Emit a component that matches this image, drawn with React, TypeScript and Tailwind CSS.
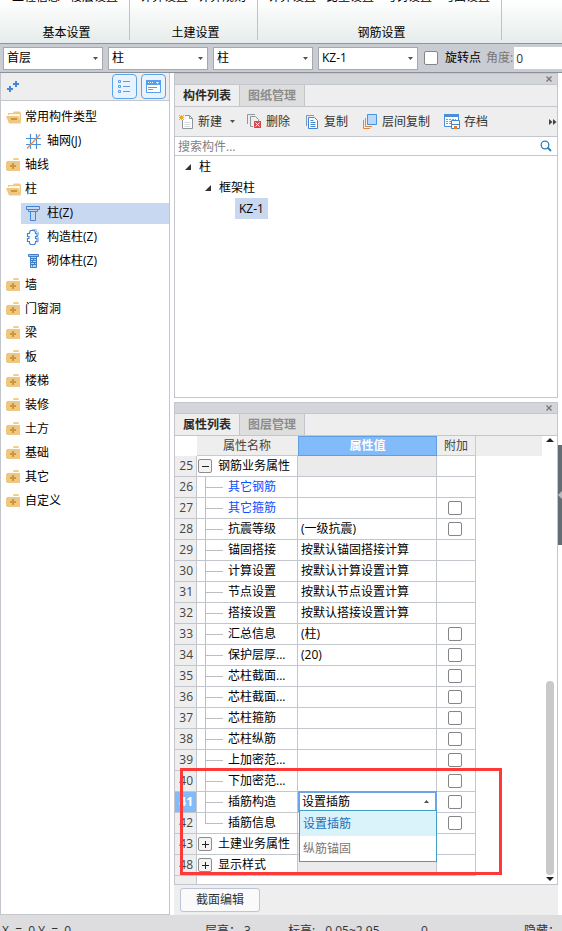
import { useState, type ReactNode } from "react";

const ribbonGroups = [
  { title: "基本设置", width: "w-[130px]", pad: "pl-3", items: ["工程信息", "楼层设置"] },
  { title: "土建设置", width: "w-[128px]", pad: "pl-2.5", items: ["计算设置", "计算规则"] },
  { title: "钢筋设置", width: "w-[244px]", pad: "pl-2.5", items: ["计算设置", "比重设置", "弯钩设置", "弯曲设置"] },
];

type IconName = "grid" | "column" | "structural" | "masonry";
type TreeRow = { label: string; kind: "open" | "closed" | "leaf"; icon?: IconName; selected?: boolean };

const treeRows: TreeRow[] = [
  { label: "常用构件类型", kind: "open" },
  { label: "轴网(J)", kind: "leaf", icon: "grid" },
  { label: "轴线", kind: "closed" },
  { label: "柱", kind: "open" },
  { label: "柱(Z)", kind: "leaf", icon: "column", selected: true },
  { label: "构造柱(Z)", kind: "leaf", icon: "structural" },
  { label: "砌体柱(Z)", kind: "leaf", icon: "masonry" },
  { label: "墙", kind: "closed" },
  { label: "门窗洞", kind: "closed" },
  { label: "梁", kind: "closed" },
  { label: "板", kind: "closed" },
  { label: "楼梯", kind: "closed" },
  { label: "装修", kind: "closed" },
  { label: "土方", kind: "closed" },
  { label: "基础", kind: "closed" },
  { label: "其它", kind: "closed" },
  { label: "自定义", kind: "closed" },
];

type Prop = {
  no: number;
  name: string;
  value?: string;
  check?: boolean;
  link?: boolean;
  group?: "plus" | "minus";
  editing?: boolean;
  last?: boolean;
};

const props: Prop[] = [
  { no: 25, name: "钢筋业务属性", group: "minus" },
  { no: 26, name: "其它钢筋", link: true },
  { no: 27, name: "其它箍筋", link: true, check: true },
  { no: 28, name: "抗震等级", value: "(一级抗震)", check: true },
  { no: 29, name: "锚固搭接", value: "按默认锚固搭接计算" },
  { no: 30, name: "计算设置", value: "按默认计算设置计算" },
  { no: 31, name: "节点设置", value: "按默认节点设置计算" },
  { no: 32, name: "搭接设置", value: "按默认搭接设置计算" },
  { no: 33, name: "汇总信息", value: "(柱)", check: true },
  { no: 34, name: "保护层厚...", value: "(20)", check: true },
  { no: 35, name: "芯柱截面...", check: true },
  { no: 36, name: "芯柱截面...", check: true },
  { no: 37, name: "芯柱箍筋", check: true },
  { no: 38, name: "芯柱纵筋", check: true },
  { no: 39, name: "上加密范...", check: true },
  { no: 40, name: "下加密范...", check: true },
  { no: 41, name: "插筋构造", editing: true, check: true },
  { no: 42, name: "插筋信息", check: true, last: true },
  { no: 43, name: "土建业务属性", group: "plus" },
  { no: 48, name: "显示样式", group: "plus" },
];

function FolderClosed() {
  return (
    <svg width="15" height="14" viewBox="0 0 15 14" aria-hidden="true">
      <path d="M7 2V1l1-1h4l1 1v1z" fill="#f3cd8d" />
      <path d="M1 3h13v10H1z" fill="#efc781" />
      <path d="M0 4h14v8H0z" fill="#efc781" />
      <path d="M6 5h2v2h2v2H8v2H6V9H4V7h2z" fill="#c9983f" />
    </svg>
  );
}

function FolderOpen() {
  return (
    <svg width="16" height="13" viewBox="0 0 16 13" aria-hidden="true">
      <path d="M2 4V2h5l1-1.500h5.500L15 2v9h-1.500V4z" fill="#f0c885" />
      <path d="M3 3h11v1H3z" fill="#fff3da" />
      <path d="M0 5h12.500l2.500 7.500H3z" fill="#efc781" />
      <path d="M5 7h6v2H5z" fill="#c9983f" />
    </svg>
  );
}

function LeafIcon({ name }: { name: IconName }) {
  if (name === "grid")
    return (
      <svg width="15" height="15" viewBox="0 0 15 15" fill="none" aria-hidden="true">
        <path d="M4.500 0v15M10.500 0v15M0 4.500h15M0 10.500h15" stroke="#4a8fdc" strokeWidth="1.200" />
        <path d="M1 14.500L14 .5" stroke="#ec8a4c" strokeWidth="1.300" />
      </svg>
    );
  if (name === "column")
    return (
      <svg width="15" height="15" viewBox="0 0 15 15" fill="none" stroke="#3f86d6" aria-hidden="true">
        <path d="M.5 .5h13v3H.5zM2.500 3.500v2h9v-2M4.500 5.500v9h5v-9" />
      </svg>
    );
  if (name === "structural")
    return (
      <svg width="15" height="16" viewBox="0 0 15 16" fill="none" aria-hidden="true">
        <path d="M6.500 2V.5h4V3h2v3.500h-1v2h1V13h-2" stroke="#9cc6f0" />
        <path d="M4.500 1.500h4l1 2v1h1.500v3H9.500v2H11v3H9.500v1.500l-1 1.500h-4l-1-1.500v-1.500H1.500v-3H3v-2H1.500v-3h2v-1z" stroke="#3f86d6" strokeWidth="1.200" fill="#fff" />
      </svg>
    );
  return (
    <svg width="13" height="14" viewBox="0 0 13 14" fill="none" stroke="#3f7fc8" aria-hidden="true">
      <path d="M1.500 .5h10v2h-10z" fill="#9fc6f2" />
      <path d="M3.500 2.500h6v11h-6z" fill="#b5d3f5" />
      <path d="M3.500 4.500h6M3.500 6.500h6M3.500 8.500h6M3.500 10.500h6M6.500 4.500v2M5.500 6.500v2M7.500 8.500v2M5.500 10.500v2" />
    </svg>
  );
}

function Caret({ up = false }: { up?: boolean }) {
  return (
    <svg width="5" height="3" viewBox="0 0 5 3" className="shrink-0" aria-hidden="true">
      <path d={up ? "M0 3L2.500 0 5 3z" : "M0 0h5L2.500 3z"} fill="#505050" />
    </svg>
  );
}

function Combo({ label, value }: { label: string; value: string }) {
  return (
    <div className="relative w-[100px] shrink-0">
      <select
        aria-label={label}
        className="block h-[23px] w-full appearance-none border border-[#a5a8ad] bg-white pl-[3px] text-black outline-none"
      >
        <option>{value}</option>
      </select>
      <span className="pointer-events-none absolute right-[5px] top-2.5">
        <Caret />
      </span>
    </div>
  );
}

function PanelHeader({ tabs }: { tabs: [string, string] }) {
  return (
    <>
      <div className="flex h-3 items-center justify-end border-y border-[#c3c6cc] bg-[#d3d5db] pr-[5px]">
        <button aria-label="关闭">
          <svg width="6" height="6" viewBox="0 0 6 6" className="block" aria-hidden="true">
            <path d="M.5 .5l5 5M5.500 .5l-5 5" stroke="#777" strokeWidth="1.400" />
          </svg>
        </button>
      </div>
      <div role="tablist" className="flex h-[22px] border-b border-[#c3c6cc] bg-[#eee] font-bold">
        <button role="tab" aria-selected="true" className="w-[65px] border-r border-[#c3c6cc] text-[#2b2b2b]">
          {tabs[0]}
        </button>
        <button role="tab" aria-selected="false" className="w-[65px] border-r border-[#c3c6cc] bg-[#dedede] text-[#8c8c8c]">
          {tabs[1]}
        </button>
      </div>
    </>
  );
}

function ToolButton({ icon, children }: { icon: ReactNode; children: ReactNode }) {
  return (
    <button className="flex shrink-0 items-center gap-1 whitespace-nowrap text-[#333]">
      <span className="flex w-4 justify-center">{icon}</span>
      {children}
    </button>
  );
}

const boxClass = "block size-3.5 appearance-none rounded-[2px] border border-[#858585] bg-white checked:bg-[#82bbfa]";

function NameCell({ row }: { row: Prop }) {
  if (row.group)
    return (
      <div className="flex h-5 items-center gap-1.5 pl-px">
        <button
          aria-label={row.group === "minus" ? "折叠" : "展开"}
          className="flex size-3.5 items-center justify-center rounded-[2px] border border-[#8c8c8c] bg-[#f4f4f4]"
        >
          <svg width="8" height="8" viewBox="0 0 8 8" stroke="#222" aria-hidden="true">
            <path d={row.group === "minus" ? "M1 4.500h7" : "M1 4.500h7M4.500 1v7"} />
          </svg>
        </button>
        {row.name}
      </div>
    );
  return (
    <div className="flex h-5 items-center pl-2">
      <span className={`flex w-[18px] flex-col self-stretch ${row.last ? "" : "border-l border-[#bbbdc1]"}`}>
        <span className={`h-[11px] border-b border-[#bbbdc1] ${row.last ? "border-l" : ""}`} />
      </span>
      <span className={`ml-[5px] ${row.link ? "text-[#0a50ff]" : ""}`}>{row.name}</span>
    </div>
  );
}

function EditingCell() {
  const options = ["设置插筋", "纵筋锚固"];
  const [value, setValue] = useState(options[0]);
  return (
    <div className="relative -mr-px -mt-px">
      <button
        aria-haspopup="listbox"
        aria-expanded="true"
        aria-label="插筋构造"
        className="flex h-[21px] w-full items-center justify-between border-2 border-[#6aa5e8] bg-white pl-0.5 pr-[6px]"
      >
        {value}
        <Caret up />
      </button>
      <ul role="listbox" className="absolute left-px right-0 top-[19px] z-10 border border-[#3ea2c8] bg-white">
        {options.map((o) => (
          <li
            key={o}
            role="option"
            aria-selected={o === value}
            onClick={() => setValue(o)}
            className={`h-[25px] pl-[3px] leading-[25px] ${o === value ? "bg-[#daf2fa] text-[#1b6fb5]" : "text-[#777]"}`}
          >
            {o}
          </li>
        ))}
      </ul>
    </div>
  );
}

function PropertyTable() {
  return (
    <table className="w-[301px] table-fixed border-separate border-spacing-0 text-left text-black">
      <colgroup>
        <col className="w-[22px]" />
        <col className="w-[101px]" />
        <col className="w-[139px]" />
        <col className="w-[39px]" />
      </colgroup>
      <thead>
        <tr className="h-5 text-[#444]">
          <th className="bg-white p-0" aria-label="序号" />
          <th className="border-b border-[#c9cbcf] bg-[#eee] p-0 pr-px text-center font-normal">属性名称</th>
          <th className="border border-[#5f9fe0] bg-[#82bbfa] p-0 text-center text-white">属性值</th>
          <th className="border-b border-r border-[#c9cbcf] bg-[#eee] p-0 text-center font-normal">附加</th>
        </tr>
      </thead>
      <tbody>
        {props.map((row) => (
          <tr key={row.no} className="h-[21px]">
            <td
              className={`border-b border-r border-[#c3c6cc] p-0 pr-[3px] text-right ${
                row.editing ? "bg-[#82bbfa] font-bold text-white" : "bg-[#eee] text-[#444]"
              }`}
            >
              {row.no}
            </td>
            <td className="whitespace-nowrap border-b border-r border-[#c3c6cc] p-0">
              <NameCell row={row} />
            </td>
            <td className={`whitespace-nowrap border-b border-r border-[#c3c6cc] p-0 ${row.group ? "bg-[#ebebeb]" : ""}`}>
              {row.editing ? <EditingCell /> : <div className="pl-[3px]">{row.value}</div>}
            </td>
            <td className="border-b border-r border-[#c3c6cc] p-0">
              {row.check && (
                <div className="flex pl-[11px]">
                  <input type="checkbox" aria-label={`附加 ${row.name}`} className={boxClass} />
                </div>
              )}
            </td>
          </tr>
        ))}
      </tbody>
    </table>
  );
}

export default function App() {
  return (
    <div className="flex h-screen flex-col overflow-hidden bg-white font-['Open_Sans','Noto_Sans_CJK_SC',sans-serif] text-[12px] leading-4 text-black">
      <header className="flex h-11 shrink-0 overflow-hidden border-b border-[#8b9698] bg-linear-to-b from-white to-[#e6eceb]">
        {ribbonGroups.map((g) => (
          <section key={g.title} className={`flex h-10 shrink-0 flex-col justify-between border-r border-[#bfc3c5] ${g.width}`}>
            <div className={`flex h-[5px] items-end gap-2.5 whitespace-nowrap ${g.pad}`}>
              {g.items.map((item, i) => (
                <button key={i}>{item}</button>
              ))}
            </div>
            <h2 className="h-[15px] pl-1 text-center">{g.title}</h2>
          </section>
        ))}
      </header>

      <div className="flex h-[29px] shrink-0 items-center gap-[5px] border-b border-[#8c9198] bg-[#c9ccd2] pl-[3px]">
        <Combo label="楼层" value="首层" />
        <Combo label="构件大类" value="柱" />
        <Combo label="构件类型" value="柱" />
        <Combo label="构件" value="KZ-1" />
        <label className="ml-px flex shrink-0 items-center gap-[7px]">
          <input type="checkbox" className={boxClass} />
          旋转点
        </label>
        <label className="flex min-w-0 flex-1 items-center gap-px whitespace-nowrap text-[#777]">
          角度:
          <input defaultValue="0" className="h-[22px] min-w-0 flex-1 bg-white pl-0.5 text-[#333] outline-none" />
        </label>
      </div>

      <main className="flex min-h-0 flex-1">
        <nav className="mr-1 flex w-[170px] shrink-0 flex-col border-x border-b border-[#c3c6cc]">
          <div className="flex h-7 shrink-0 items-start gap-1 border-b border-[#c3c6cc] bg-[#eee] pl-1.5 pr-[3px] pt-px">
            <button aria-label="添加" className="mr-auto mt-[7px]">
              <svg width="12" height="11" viewBox="0 0 12 11" className="block" aria-hidden="true">
                <path d="M2 5h2v2h2v2H4v2H2V9H0V7h2zM8 0h2v2h2v2h-2v2H8V4H6V2h2z" fill="#4387d6" />
              </svg>
            </button>
            <button aria-label="列表视图" className="flex size-[25px] items-center justify-center rounded border border-[#5aa2ec] bg-[#e9f3fd]">
              <svg width="13" height="13" viewBox="0 0 13 13" fill="none" stroke="#559fec" aria-hidden="true">
                <path d="M.5 .5h2v2h-2zM.5 5.500h2v2h-2zM.5 10.500h2v2h-2zM5 1.500h7M5 6.500h7M5 11.500h7" />
              </svg>
            </button>
            <button aria-label="面板视图" className="flex size-[25px] items-center justify-center rounded border border-[#5aa2ec] bg-[#e9f3fd]">
              <svg width="15" height="13" viewBox="0 0 15 13" fill="none" aria-hidden="true">
                <path d="M.5 .5h14v12H.5z" fill="#fff" stroke="#559fec" />
                <path d="M0 0h15v5H0z" fill="#559fec" />
                <path d="M2 2h1v1H2zM4 2h1v1H4zM6 2h1v1H6zM10 2h3l-1.500 2z" fill="#fff" />
                <path d="M2 7.500h9M2 9.500h5" stroke="#559fec" />
              </svg>
            </button>
          </div>
          <ul className="pt-1">
            {treeRows.map((r) => (
              <li key={r.label} className="flex h-6 items-center">
                {r.kind === "leaf" ? (
                  <button className={`ml-5 flex h-[21px] flex-1 items-center gap-1.5 pl-1 ${r.selected ? "bg-[#c8d8f0]" : ""}`}>
                    <span className="flex w-4 justify-center">{r.icon && <LeafIcon name={r.icon} />}</span>
                    {r.label}
                  </button>
                ) : (
                  <button className="flex items-center gap-[3px] pl-1">
                    <span className="flex w-[17px] justify-center">{r.kind === "open" ? <FolderOpen /> : <FolderClosed />}</span>
                    {r.label}
                  </button>
                )}
              </li>
            ))}
          </ul>
        </nav>

        <div className="flex min-w-0 flex-1 flex-col">
          <section className="mb-1 flex shrink-0 flex-col border-x border-b border-[#c3c6cc]">
            <PanelHeader tabs={["构件列表", "图纸管理"]} />
            <div className="flex h-[30px] items-center border-b border-[#c3c6cc] bg-[#eee] pl-[3px]">
              <ToolButton
                icon={
                  <svg width="15" height="14" viewBox="0 0 15 14" fill="none" aria-hidden="true">
                    <path d="M3.500 5v8.500h10v-10l-3-3H6" fill="#fff" stroke="#8f979d" />
                    <path d="M10.500 .5v3h3" stroke="#8f979d" />
                    <path d="M5.500 7.500h6M5.500 9.500h6M5.500 11.500h6" stroke="#d6d9dc" />
                    <path d="M0 0l5 5M5 0L0 5M2.500 0v5M0 2.500h5" stroke="#eda62f" />
                  </svg>
                }
              >
                新建
              </ToolButton>
              <button aria-label="新建选项" className="mx-2 pr-[3px]">
                <Caret />
              </button>
              <ToolButton
                icon={
                  <svg width="15" height="15" viewBox="0 0 15 15" fill="none" aria-hidden="true">
                    <path d="M.5 10V.5H8M3.500 12.500v-10h5l3 3V8M6 12.500H3.500" stroke="#8f979d" />
                    <path d="M7 7h7v7H7z" fill="#d84a4a" />
                    <path d="M8.500 8.500l4 4M12.500 8.500l-4 4" stroke="#fff" />
                  </svg>
                }
              >
                删除
              </ToolButton>
              <span className="w-3.5 shrink-0" />
              <ToolButton
                icon={
                  <svg width="13" height="14" viewBox="0 0 13 14" fill="none" stroke="#3f86d6" aria-hidden="true">
                    <path d="M.5 11V.5H8" stroke="#7d98b5" />
                    <path d="M2.500 2.500h6l3 3v8h-9z" fill="#fff" />
                    <path d="M4.500 5.500h3M4.500 7.500h5M4.500 9.500h5M4.500 11.500h5" />
                  </svg>
                }
              >
                复制
              </ToolButton>
              <span className="w-3.5 shrink-0" />
              <ToolButton
                icon={
                  <svg width="15" height="15" viewBox="0 0 15 15" fill="none" aria-hidden="true">
                    <path d="M.5 6v8.500H7M2.500 4v8.500H9" stroke="#ea8437" />
                    <path d="M4.500 .5h9v10h-9z" fill="#b9d8fa" stroke="#4a93e0" />
                  </svg>
                }
              >
                层间复制
              </ToolButton>
              <span className="w-3.5 shrink-0" />
              <ToolButton
                icon={
                  <svg width="16" height="15" viewBox="0 0 16 15" fill="none" aria-hidden="true">
                    <path d="M.5 .5h14v12H.5z" fill="#fff" stroke="#4a8fdc" />
                    <path d="M0 0h15v3H0z" fill="#4a8fdc" />
                    <path d="M2 5.500h10M2 7.500h5M2 9.500h5" stroke="#8f979d" strokeDasharray="2 1" />
                    <path d="M7.500 6.500h8v8h-8z" fill="#fff" stroke="#3f86d6" />
                    <path d="M8 10h7v1H8z" fill="#3f86d6" />
                    <path d="M10 12h3v3h-3z" fill="#ea7a2c" />
                  </svg>
                }
              >
                存档
              </ToolButton>
              <button aria-label="更多" className="ml-auto">
                <svg width="8" height="6" viewBox="0 0 8 6" fill="#444" aria-hidden="true">
                  <path d="M0 0l3.500 3L0 6zM4 0l3.500 3L4 6z" />
                </svg>
              </button>
            </div>
            <div className="flex h-[19px] items-center border-b border-[#c3c6cc] bg-white pl-[3px] pr-[5px]">
              <input
                aria-label="搜索构件"
                placeholder="搜索构件..."
                className="h-[18px] min-w-0 flex-1 outline-none placeholder:text-[#808080]"
              />
              <button aria-label="搜索">
                <svg width="12" height="12" viewBox="0 0 12 12" fill="none" stroke="#2b84b8" className="block" aria-hidden="true">
                  <circle cx="5" cy="5" r="3.800" strokeWidth="1.300" />
                  <path d="M7.500 7.500l3.500 3.500" strokeWidth="2" />
                </svg>
              </button>
            </div>
            <ul className="h-[241px]">
              {[
                { label: "柱", pad: "pl-2.5" },
                { label: "框架柱", pad: "pl-[30px]" },
              ].map((n) => (
                <li key={n.label} className={`flex h-[21px] items-center gap-2 ${n.pad}`}>
                  <svg width="6" height="6" viewBox="0 0 6 6" aria-hidden="true">
                    <path d="M6 0v6H0z" fill="#333" />
                  </svg>
                  {n.label}
                </li>
              ))}
              <li className="flex h-[21px] pl-[60px]">
                <button className="bg-[#c8d8f0] px-1">KZ-1</button>
              </li>
            </ul>
          </section>

          <section className="flex min-h-0 flex-1 flex-col bg-[#eee]">
            <div className="flex min-h-0 flex-1 flex-col border-x border-b border-[#c3c6cc]">
              <PanelHeader tabs={["属性列表", "图层管理"]} />
              <div className="relative flex min-h-0 flex-1 bg-white">
                <div className="flex min-w-0 flex-1 flex-col">
                  <div className="flex">
                    <PropertyTable />
                    <div className="h-5 flex-1 bg-[#eee]" />
                  </div>
                  <div className="w-[22px] flex-1 border-r border-[#c3c6cc] bg-[#eee]" />
                </div>
                <div className="flex w-[15px] shrink-0 flex-col items-center pb-[3px] pt-0.5">
                  <svg width="8" height="4" viewBox="0 0 8 4" aria-hidden="true">
                    <path d="M0 4l4-4 4 4z" fill="#222" />
                  </svg>
                  <div className="mb-0.5 mt-auto h-[194px] w-2 rounded-full bg-[#c9c9c9]" />
                  <svg width="8" height="4" viewBox="0 0 8 4" aria-hidden="true">
                    <path d="M0 0h8L4 4z" fill="#222" />
                  </svg>
                </div>
                <div className="pointer-events-none absolute left-[5px] top-[332px] z-20 h-[107px] w-[322px] border-3 border-[#ff3838]" />
              </div>
            </div>
            <div className="flex h-[30px] shrink-0 items-center pl-1.5">
              <button className="h-6 w-20 rounded-[3px] border border-[#bcc6d8] bg-[#fafafa] text-[#333]">截面编辑</button>
            </div>
          </section>
        </div>

        <aside className="w-1 shrink-0 pt-[372px]">
          <button aria-label="展开侧栏" className="flex h-[100px] w-full items-center bg-[#646c74]">
            <svg width="4" height="8" viewBox="0 0 4 8" aria-hidden="true">
              <path d="M4 0v8L0 4z" fill="#b9bdc1" />
            </svg>
          </button>
        </aside>
      </main>

      <footer className="flex h-4 shrink-0 overflow-hidden whitespace-pre bg-[#dddddf] pl-0.5 pt-2 text-[#333]">
        <span className="w-[203px] shrink-0">{"X  =  0 Y  =  0"}</span>
        <span className="w-[83px] shrink-0">层高：&nbsp;3</span>
        <span className="w-[133px] shrink-0">标高:&nbsp; -0.05~2.95</span>
        <span className="flex-1">0</span>
        <span className="w-[38px] shrink-0">隐藏：</span>
      </footer>
    </div>
  );
}
